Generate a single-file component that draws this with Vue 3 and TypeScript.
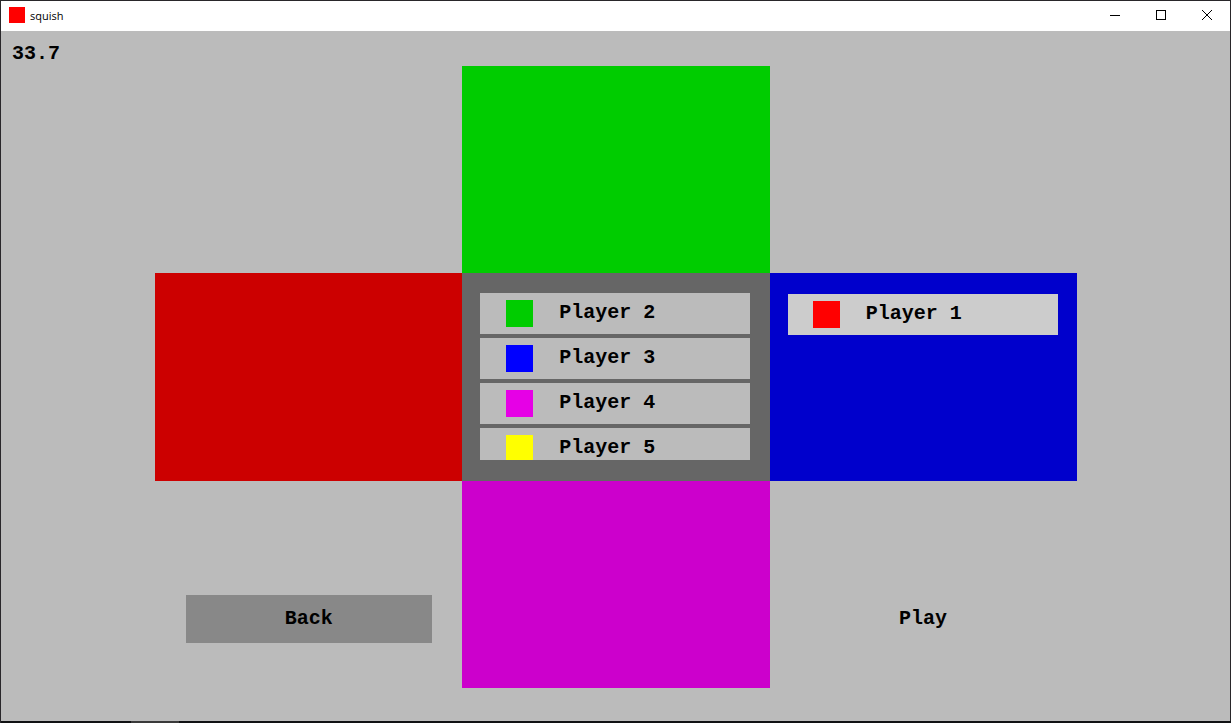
<script setup lang="ts">
interface Player {
  name: string
  color: string
}

interface Team {
  id: string
  players: Player[]
}

const timer = '33.7'

const teams: Team[] = [
  { id: 'green', players: [] },
  { id: 'red', players: [] },
  {
    id: 'lobby',
    players: [
      { name: 'Player 2', color: '#00cc00' },
      { name: 'Player 3', color: '#0000ff' },
      { name: 'Player 4', color: '#e600e6' },
      { name: 'Player 5', color: '#ffff00' },
    ],
  },
  { id: 'blue', players: [{ name: 'Player 1', color: '#ff0000' }] },
  { id: 'magenta', players: [] },
]
</script>

<template>
  <div class="window">
    <header class="titlebar">
      <span class="app-icon"></span>
      <span class="title">squish</span>
      <div class="controls">
        <button type="button" aria-label="Minimize">
          <svg width="12" height="12" viewBox="0 0 12 12" shape-rendering="crispEdges">
            <path d="M1 6.5H11" />
          </svg>
        </button>
        <button type="button" aria-label="Maximize">
          <svg width="12" height="12" viewBox="0 0 12 12" shape-rendering="crispEdges">
            <path d="M1.5 1.5H10.5V10.5H1.5Z" />
          </svg>
        </button>
        <button type="button" aria-label="Close">
          <svg width="12" height="12" viewBox="0 0 12 12">
            <path d="M1 1L11 11M11 1L1 11" />
          </svg>
        </button>
      </div>
    </header>

    <main class="board">
      <div class="timer">{{ timer }}</div>
      <section v-for="team in teams" :key="team.id" class="pane" :class="team.id">
        <ul v-if="team.players.length" class="players">
          <li v-for="player in team.players" :key="player.name" class="player">
            <span class="swatch" :style="{ background: player.color }"></span>
            <span>{{ player.name }}</span>
          </li>
        </ul>
      </section>
      <button type="button" class="action back">Back</button>
      <button type="button" class="action play">Play</button>
    </main>

    <div class="edge"></div>
    <div class="taskbar"><span class="task"></span></div>
  </div>
</template>

<style>
body {
  margin: 0;
}
</style>

<style scoped>
.window {
  position: relative;
  box-sizing: border-box;
  display: flex;
  flex-direction: column;
  height: 100vh;
  overflow: hidden;
  border-top: 1px solid #29272a;
  border-left: 1px solid #29272a;
  background: #bbbbbb;
  color: #000000;
  font-family: "Courier New", "Liberation Mono", monospace;
  font-size: 20px;
  font-weight: 700;
  line-height: 26px;
}

.titlebar {
  flex: none;
  display: flex;
  align-items: center;
  height: 30px;
  padding-left: 8px;
  padding-right: 1px;
  background: #ffffff;
  font-family: "Open Sans", "Noto Sans", sans-serif;
  font-size: 11px;
  font-weight: 400;
  line-height: 16px;
}

.app-icon {
  width: 16px;
  height: 16px;
  margin-right: 5px;
  margin-bottom: 2px;
  background: #ff0000;
}

.controls {
  display: flex;
  align-self: stretch;
  margin-left: auto;
}

.controls button {
  display: flex;
  align-items: center;
  justify-content: center;
  width: 46px;
  padding: 0 0 2px;
  border: 0;
  background: none;
}

.controls svg {
  fill: none;
  stroke: #000000;
  stroke-width: 1;
}

.board {
  flex: 1;
  min-height: 0;
  display: grid;
  grid-template-columns: 1fr 2fr 2fr 2fr 1fr;
  grid-template-rows: minmax(0, 1fr) repeat(3, minmax(0, 6fr)) minmax(0, 1fr);
}

.timer {
  grid-area: 1 / 1;
  padding: 10px 0 0 11px;
}

.pane {
  box-sizing: border-box;
  min-height: 0;
  padding: 20px 20px 21px 18px;
}

.green {
  grid-area: 2 / 3;
  background: #00cc00;
}

.red {
  grid-area: 3 / 2;
  background: #cc0000;
}

.lobby {
  grid-area: 3 / 3;
  background: #666666;
}

.blue {
  grid-area: 3 / 4;
  padding: 21px 19px 21px 18px;
  background: #0000cc;
}

.magenta {
  grid-area: 4 / 3;
  background: #cc00cc;
}

.players {
  display: flex;
  flex-direction: column;
  gap: 4px;
  height: 100%;
  margin: 0;
  padding: 0;
  overflow: hidden;
  list-style: none;
}

.player {
  flex: none;
  box-sizing: border-box;
  display: flex;
  align-items: flex-start;
  gap: 26px;
  height: 41px;
  padding: 7px 0 0 26px;
  background: #bbbbbb;
}

.blue .player {
  padding-left: 25px;
  background: #cccccc;
}

.swatch {
  flex: none;
  width: 27px;
  height: 27px;
}

.action {
  height: 48px;
  padding: 0;
  border: 0;
  background: none;
  color: inherit;
  font: inherit;
}

.back {
  grid-area: 4 / 1 / 5 / 3;
  margin: 114px 30px 0 40%;
  background: #888888;
}

.play {
  grid-area: 4 / 4 / 5 / 6;
  margin: 114px 40% 0 30px;
}

.edge {
  position: absolute;
  top: 0;
  right: 0;
  bottom: 0;
  width: 1px;
  background: #29272a;
}

.taskbar {
  position: absolute;
  left: 0;
  right: 0;
  bottom: 0;
  height: 2px;
  padding-left: 130px;
  background: #101113;
}

.task {
  display: block;
  width: 48px;
  height: 2px;
  background: #3a3a3a;
}
</style>
